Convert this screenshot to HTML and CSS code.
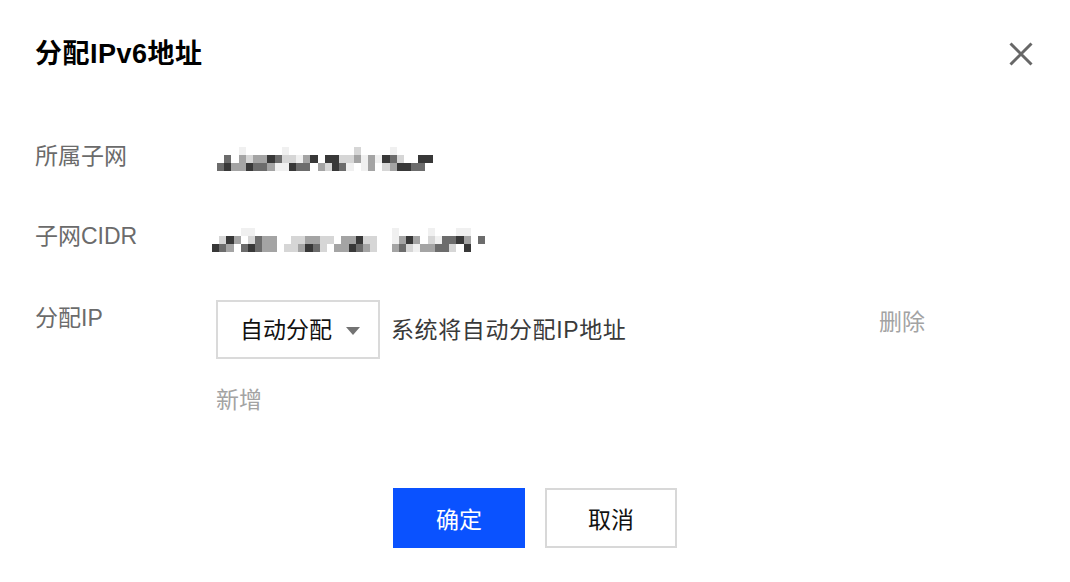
FILE: index.html
```html
<!DOCTYPE html>
<html lang="zh-CN">
  <head>
    <meta charset="UTF-8" />
    <meta name="viewport" content="width=device-width, initial-scale=1.0" />
    <title>分配IPv6地址</title>
    <link rel="stylesheet" href="styles.css">
  </head>
  <body>
    <div class="dialog">
      <div class="dialog-header">
        <h2 class="dialog-title">分配IPv6地址</h2>
        <button class="close-btn" aria-label="关闭">
          <svg width="24" height="24" viewBox="0 0 24 24">
            <path d="M1.5 1.5 L22.5 22.5 M22.5 1.5 L1.5 22.5" stroke="#676767" stroke-width="3" fill="none" />
          </svg>
        </button>
      </div>

      <div class="form">
        <div class="form-row">
          <div class="form-label">所属子网</div>
          <div class="form-value">
            <div class="mosaic" data-rows="000100000100000000020000100000|040323354221350552231315420055|453354431154403254101302355440"></div>
          </div>
        </div>
        <div class="form-row">
          <div class="form-label">子网CIDR</div>
          <div class="form-value">
            <div class="mosaic mosaic-cidr" data-rows="00001100000000000000000001000010001100|02530243300223322033522001353021445304|54304543302235420335432003421334420500"></div>
          </div>
        </div>
        <div class="form-row form-row-ip">
          <div class="form-label">分配IP</div>
          <div class="form-value ip-value">
            <div class="select">
              <span class="select-text">自动分配</span>
              <span class="caret"></span>
            </div>
            <span class="hint">系统将自动分配IP地址</span>
            <a class="link-muted delete-link">删除</a>
          </div>
        </div>
        <div class="form-row">
          <div class="form-label"></div>
          <div class="form-value">
            <a class="link-muted">新增</a>
          </div>
        </div>
      </div>

      <div class="dialog-footer">
        <button class="btn btn-primary">确定</button>
        <button class="btn">取消</button>
      </div>
    </div>
    <script>
      // pixelated placeholders for the hidden subnet values
      const shades = ["#ffffff", "#f0f0f0", "#d6d6d6", "#a4a4a4", "#6c6c6c", "#383838"];
      document.querySelectorAll(".mosaic").forEach((mosaic) => {
        mosaic.dataset.rows.split("|").forEach((row) => {
          const line = document.createElement("div");
          line.className = "mosaic-row";
          row.split("").forEach((n) => {
            const cell = document.createElement("span");
            cell.className = "mosaic-cell";
            cell.style.background = shades[Number(n)];
            line.appendChild(cell);
          });
          mosaic.appendChild(line);
        });
      });
    </script>
  </body>
</html>
```

FILE: styles.css
```css
body {
  margin: 0;
  background: #fff;
  font-family: "Liberation Sans", "Noto Sans CJK SC", sans-serif;
  color: #000;
}
.dialog {
  width: 1070px;
  height: 582px;
}
.dialog-header {
  height: 108px;
  display: flex;
  align-items: center;
  justify-content: space-between;
  padding: 0 37px 0 35px;
}
.dialog-title {
  margin: 0;
  font-size: 27px;
  font-weight: bold;
  line-height: 32px;
  letter-spacing: 0.5px;
}
.close-btn {
  border: none;
  background: none;
  padding: 0;
  width: 24px;
  height: 24px;
  cursor: pointer;
}
.close-btn svg {
  display: block;
}
.form {
  display: flex;
  flex-direction: column;
  gap: 48px;
  padding: 32px 0 0 35px;
}
.form-row {
  display: flex;
  align-items: flex-start;
  font-size: 23px;
  line-height: 32px;
}
.form-row-ip {
  margin-bottom: -23px;
}
.form-label {
  width: 181px;
  flex-shrink: 0;
  color: #6b6b6b;
}
.form-row-ip .form-label {
  padding-top: 2px;
}
.form-value {
  display: flex;
  align-items: flex-start;
}
.mosaic {
  margin-top: 7px;
  margin-left: 1px;
}
.mosaic-cidr {
  margin-left: -4px;
  margin-top: 8px;
}
.mosaic-row {
  display: flex;
  height: 8px;
}
.mosaic-cell {
  width: 7.2px;
  height: 8px;
}
.ip-value {
  width: 709px;
  align-items: center;
}
.select {
  box-sizing: border-box;
  width: 164px;
  height: 59px;
  border: 2px solid #dadada;
  display: flex;
  align-items: center;
  padding-left: 22px;
  color: #111;
}
.caret {
  width: 0;
  height: 0;
  margin-left: 14px;
  margin-top: 3px;
  border-left: 7.5px solid transparent;
  border-right: 7.5px solid transparent;
  border-top: 8px solid #737373;
}
.hint {
  margin-left: 11px;
  color: #3a3a3a;
  letter-spacing: 0.6px;
}
.link-muted {
  color: #a3a3a3;
  cursor: pointer;
}
.delete-link {
  margin-left: auto;
  align-self: flex-start;
  padding-top: 6px;
}
.dialog-footer {
  display: flex;
  justify-content: center;
  gap: 20px;
  margin-top: 72px;
}
.btn {
  box-sizing: border-box;
  width: 132px;
  height: 60px;
  border: 2px solid #d8d8d8;
  background: #fff;
  font-family: inherit;
  font-size: 23px;
  color: #111;
  cursor: pointer;
}
.btn-primary {
  background: #0a52ff;
  border-color: #0a52ff;
  color: #fff;
}
```
